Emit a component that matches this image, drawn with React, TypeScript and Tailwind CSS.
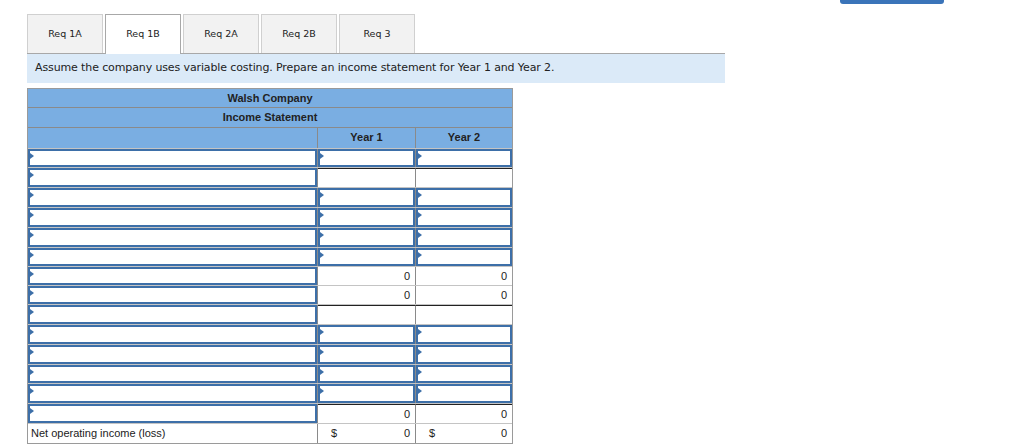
import React from 'react';

type Cell = 'input' | 'blank' | 'zero' | 'dollar';

interface Row {
    h: number;
    label: 'input' | string;
    y1: Cell;
    y2: Cell;
    topBlack?: boolean;
}

const rows: Row[] = [
    { h: 19, label: 'input', y1: 'input', y2: 'input' },
    { h: 20, label: 'input', y1: 'blank', y2: 'blank', topBlack: true },
    { h: 20, label: 'input', y1: 'input', y2: 'input' },
    { h: 20, label: 'input', y1: 'input', y2: 'input' },
    { h: 20, label: 'input', y1: 'input', y2: 'input' },
    { h: 19, label: 'input', y1: 'input', y2: 'input' },
    { h: 19, label: 'input', y1: 'zero', y2: 'zero' },
    { h: 19, label: 'input', y1: 'zero', y2: 'zero' },
    { h: 20, label: 'input', y1: 'blank', y2: 'blank', topBlack: true },
    { h: 20, label: 'input', y1: 'input', y2: 'input' },
    { h: 20, label: 'input', y1: 'input', y2: 'input' },
    { h: 19, label: 'input', y1: 'input', y2: 'input' },
    { h: 20, label: 'input', y1: 'input', y2: 'input' },
    { h: 20, label: 'input', y1: 'zero', y2: 'zero', topBlack: true },
    { h: 20, label: 'Net operating income (loss)', y1: 'dollar', y2: 'dollar' },
];

const tabs = ['Req 1A', 'Req 1B', 'Req 2A', 'Req 2B', 'Req 3'];

const InputBox = () => (
    <div className="relative h-full w-full border-2 border-[#3d6fa8] bg-white">
        <div className="absolute left-0 top-[2px] h-0 w-0 border-y-[3px] border-l-[4px] border-y-transparent border-l-[#3d6fa8]" />
    </div>
);

const ValueCell = ({ kind }: { kind: Cell }) => {
    if (kind === 'input') return <InputBox />;
    if (kind === 'blank') return <div className="h-full w-full bg-white" />;
    return (
        <div className="flex h-full w-full items-center justify-between bg-white px-[4px] pr-[5px] text-[11px] text-[#222]">
            <span className="pl-[9px]">{kind === 'dollar' ? '$' : ''}</span>
            <span>0</span>
        </div>
    );
};

export default function App() {
    return (
        <div className="relative h-[446px] w-[1024px] overflow-hidden bg-white" style={{ fontFamily: '"DejaVu Sans", Verdana, sans-serif' }}>
            {/* top right button edge */}
            <div className="absolute left-[840px] top-0 h-[4px] w-[104px] rounded-b-[3px] bg-[#3a74b9]" />

            <div className="pl-[27px] pt-[14px]">
                {/* Tabs */}
                <div className="flex w-[698px] gap-[2px] border-b border-[#a8a8a8]">
                    {tabs.map((t, i) => (
                        <div
                            key={t}
                            className={`flex h-[39px] w-[76px] items-center justify-center text-[9.5px] text-[#222] ${
                                i === 1
                                    ? '-mb-px h-[40px] border border-b-0 border-[#a8a8a8] bg-white'
                                    : 'border border-b-0 border-[#d0d0d0] bg-[#f2f2f2]'
                            }`}
                        >
                            {t}
                        </div>
                    ))}
                </div>

                {/* Instruction */}
                <div className="flex h-[29px] w-[698px] items-center bg-[#dbeaf8] pl-[8px] text-[11px] tracking-[-0.12px] text-[#222]">
                    Assume the company uses variable costing. Prepare an income statement for Year 1 and Year 2.
                </div>

                {/* Table */}
                <div
                    className="mt-[5px] w-[486px] border border-[#9a9a9a]"
                    style={{ fontFamily: '"Liberation Sans", Arial, sans-serif' }}
                >
                    <div className="flex h-[19px] items-center justify-center border-b border-[#8a8a8a] bg-[#7aaee2] text-[11px] font-bold text-[#222]">
                        Walsh Company
                    </div>
                    <div className="flex h-[20px] items-center justify-center border-b border-[#8a8a8a] bg-[#7aaee2] text-[11px] font-bold text-[#222]">
                        Income Statement
                    </div>
                    <div className="grid h-[20px] grid-cols-[290px_98px_1fr] bg-[#7aaee2] text-[11px] font-bold text-[#222]">
                        <div className="border-r border-[#8a8a8a]" />
                        <div className="flex items-center justify-center border-r border-[#8a8a8a] pb-[2px]">Year 1</div>
                        <div className="flex items-center justify-center pb-[2px]">Year 2</div>
                    </div>

                    {rows.map((r, i) => (
                        <div
                            key={i}
                            className="grid grid-cols-[290px_98px_1fr] border-t border-[#c4c4c4]"
                            style={{ height: r.h }}
                        >
                            <div className="border-r border-[#8a8a8a]">
                                {r.label === 'input' ? (
                                    <InputBox />
                                ) : (
                                    <div className="flex h-full items-center pl-[3px] text-[11px] text-[#222]">{r.label}</div>
                                )}
                            </div>
                            <div className={`border-r border-[#8a8a8a] ${r.topBlack ? 'border-t border-t-[#222]' : ''}`}>
                                <ValueCell kind={r.y1} />
                            </div>
                            <div className={r.topBlack ? 'border-t border-t-[#222]' : ''}>
                                <ValueCell kind={r.y2} />
                            </div>
                        </div>
                    ))}
                </div>
            </div>
        </div>
    );
}
